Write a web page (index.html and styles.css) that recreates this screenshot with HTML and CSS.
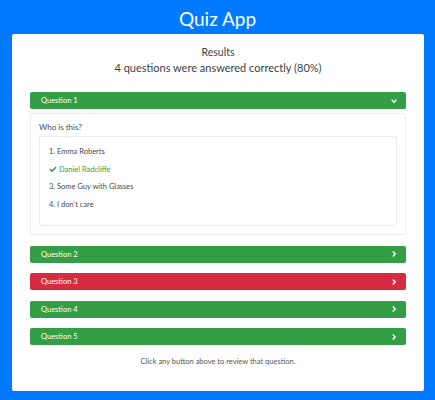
FILE: index.html
```html
<!DOCTYPE html>
<html>
<head>
<meta charset="utf-8">
<link rel="stylesheet" href="styles.css">
</head>
<body>
<header class="title">Quiz App</header>
<main class="card">
  <div class="results">
    <div class="results-head">Results</div>
    <div class="results-score">4 questions were answered correctly (80%)</div>
  </div>
  <div class="questions">
    <div class="q-group">
      <button class="q-btn ok"><span>Question 1</span>
        <svg class="chev" viewBox="0 0 10 10"><path d="M2 3.5 L5 6.5 L8 3.5" fill="none" stroke="#fff" stroke-width="1.8"/></svg>
      </button>
      <div class="q-panel">
        <div class="q-text">Who is this?</div>
        <ul class="answers">
          <li>1. Emma Roberts</li>
          <li class="correct"><svg class="check" viewBox="0 0 10 10"><path d="M1.2 5.2 L3.8 7.8 L8.8 2.4" fill="none" stroke="#339e45" stroke-width="1.9"/></svg>Daniel Radcliffe</li>
          <li>3. Some Guy with Glasses</li>
          <li>4. I don't care</li>
        </ul>
      </div>
    </div>
    <button class="q-btn ok"><span>Question 2</span>
      <svg class="chev" viewBox="0 0 10 10"><path d="M3.5 2 L6.5 5 L3.5 8" fill="none" stroke="#fff" stroke-width="1.8"/></svg>
    </button>
    <button class="q-btn bad"><span>Question 3</span>
      <svg class="chev" viewBox="0 0 10 10"><path d="M3.5 2 L6.5 5 L3.5 8" fill="none" stroke="#fff" stroke-width="1.8"/></svg>
    </button>
    <button class="q-btn ok"><span>Question 4</span>
      <svg class="chev" viewBox="0 0 10 10"><path d="M3.5 2 L6.5 5 L3.5 8" fill="none" stroke="#fff" stroke-width="1.8"/></svg>
    </button>
    <button class="q-btn ok"><span>Question 5</span>
      <svg class="chev" viewBox="0 0 10 10"><path d="M3.5 2 L6.5 5 L3.5 8" fill="none" stroke="#fff" stroke-width="1.8"/></svg>
    </button>
  </div>
  <p class="hint">Click any button above to review that question.</p>
</main>
</body>
</html>
```
FILE: styles.css
```css
* { box-sizing: border-box; }
html, body { margin: 0; padding: 0; }
body {
  background: #007bff;
  font-family: Lato, "Open Sans", sans-serif;
  color: #343a40;
  height: 400px;
  overflow: hidden;
}
.title {
  height: 34px;
  padding-top: 6px;
  text-align: center;
  color: #fff;
  font-size: 19px;
  line-height: 26px;
}
.card {
  margin: 0 11px 0 12px;
  height: 357px;
  background: #fff;
  border-radius: 2px;
  padding: 10px 18px 0 18px;
}
.results { text-align: center; color: #3a3f44; }
.results-head { font-size: 10.5px; line-height: 16px; }
.results-score { font-size: 11px; line-height: 16px; }
.questions {
  margin-top: 16px;
  display: flex;
  flex-direction: column;
  gap: 10.5px;
}
.q-group { display: flex; flex-direction: column; gap: 4px; }
.q-btn {
  display: flex;
  align-items: center;
  justify-content: space-between;
  width: 100%;
  height: 17px;
  padding: 0 8px 0 11px;
  border: none;
  border-radius: 2px;
  color: #fff;
  font-family: Lato, "Open Sans", sans-serif;
  font-size: 7.5px;
  text-align: left;
}
.q-btn.ok { background: #339e45; }
.q-btn.bad { background: #d72b42; }
.chev { width: 8px; height: 8px; }
.q-panel {
  border: 1px solid #ebedef;
  border-radius: 2px;
  padding: 7px 8px 8px 8px;
}
.q-text { font-size: 8px; line-height: 13px; margin-bottom: 2px; color: #4a4a4a; }
.answers {
  list-style: none;
  margin: 0;
  padding: 6px 9px 12px 9px;
  border: 1px solid #ebedef;
  border-radius: 2px;
}
.answers li {
  font-size: 7.5px;
  line-height: 17.5px;
  color: #4a4a4a;
  display: flex;
  align-items: center;
}
.answers li.correct { color: #339e45; }
.check { width: 8px; height: 8px; margin-right: 2px; }
.hint {
  margin: 12px 0 0 0;
  text-align: center;
  font-size: 7.5px;
  line-height: 10px;
  color: #555;
}
```
